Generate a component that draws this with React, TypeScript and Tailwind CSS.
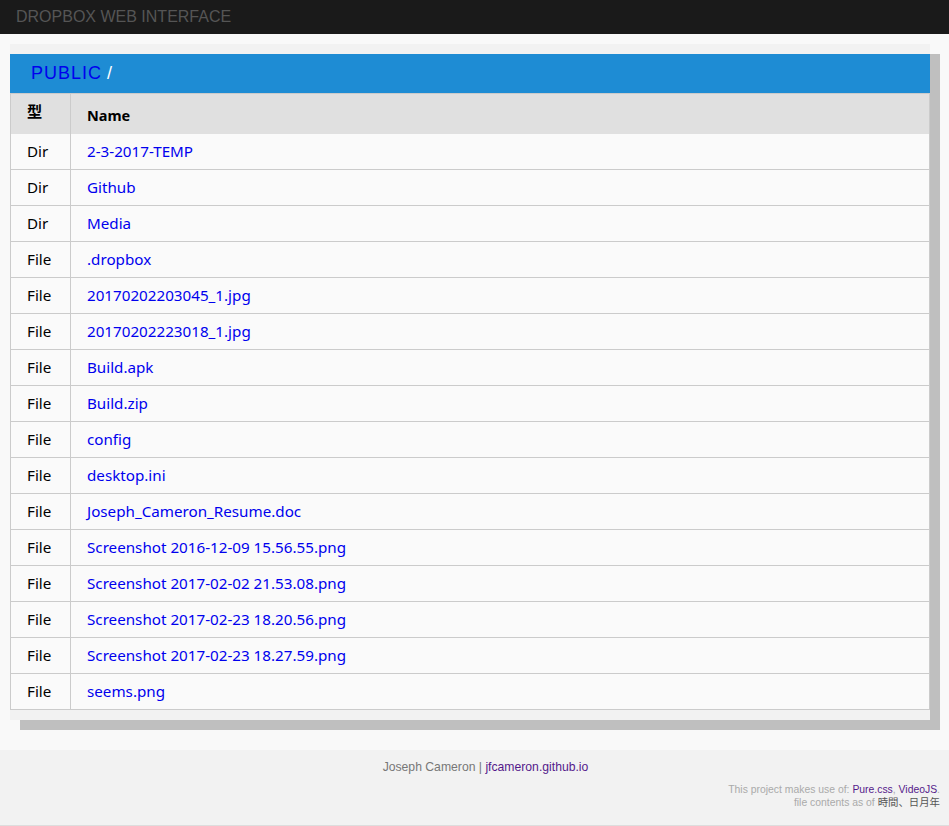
const rows: [string, string][] = [
  ["Dir", "2-3-2017-TEMP"],
  ["Dir", "Github"],
  ["Dir", "Media"],
  ["File", ".dropbox"],
  ["File", "20170202203045_1.jpg"],
  ["File", "20170202223018_1.jpg"],
  ["File", "Build.apk"],
  ["File", "Build.zip"],
  ["File", "config"],
  ["File", "desktop.ini"],
  ["File", "Joseph_Cameron_Resume.doc"],
  ["File", "Screenshot 2016-12-09 15.56.55.png"],
  ["File", "Screenshot 2017-02-02 21.53.08.png"],
  ["File", "Screenshot 2017-02-23 18.20.56.png"],
  ["File", "Screenshot 2017-02-23 18.27.59.png"],
  ["File", "seems.png"],
];

export default function App() {
  return (
    <div className="min-h-[826px] bg-[#f9f9f9] font-['Liberation_Sans',Arial,sans-serif]">
      <header className="flex h-[34px] items-center bg-[#1a1a1a] px-4">
        <span className="text-[16px] text-[#555]">DROPBOX WEB INTERFACE</span>
      </header>

      <main className="pb-[30px] pl-[10px] pr-[19px] pt-[10px]">
        <div className="bg-[#f2f2f2] py-[10px] shadow-[10px_10px_0_#bfbfbf]">
          <div className="flex h-[39px] items-center bg-[#1e8cd4] pl-[21px] text-[18px] tracking-[1px]">
            <a href="#" className="text-[#0000ee]">PUBLIC</a>
            <span className="ml-[5px] text-white">/</span>
          </div>
          <table className="w-full border-collapse border border-[#cbcbcb] font-['Noto_Sans','Noto_Sans_CJK_JP',sans-serif] text-[15.2px]">
            <thead>
              <tr className="h-[40px] bg-[#e0e0e0] text-left text-black">
                <th className="w-[60px] border-r border-[#cbcbcb] pl-[16px] pb-[4px] font-bold">型</th>
                <th className="pl-[16px] pt-[5px] text-[14.5px] font-bold">Name</th>
              </tr>
            </thead>
            <tbody className="bg-[#fafafa]">
              {rows.map(([kind, name]) => (
                <tr key={name} className="h-[36px] border-b border-[#cbcbcb]">
                  <td className="border-r border-[#cbcbcb] pl-[16px] text-black">{kind}</td>
                  <td className="pl-[16px]">
                    <a href="#" className="text-[#0000ee]">{name}</a>
                  </td>
                </tr>
              ))}
            </tbody>
          </table>
        </div>
      </main>

      <footer className="h-[76px] border-b border-[#ddd] bg-[#f2f2f2] pl-[31px] pr-[9px] pt-[8px]">
        <p className="text-center text-[12.2px] text-[#777]">
          Joseph Cameron | <a href="#" className="text-[#551a8b]">jfcameron.github.io</a>
        </p>
        <div className="mt-[8px] text-right text-[10.4px] leading-[12px] text-[#aaa]">
          <p>
            This project makes use of: <a href="#" className="text-[#551a8b]">Pure.css</a>,{" "}
            <a href="#" className="text-[#551a8b]">VideoJS</a>.
          </p>
          <p>
            file contents as of{" "}
            <span className="font-['Noto_Sans_CJK_JP',sans-serif] text-[#555]">時間、日月年</span>
          </p>
        </div>
      </footer>
    </div>
  );
}
